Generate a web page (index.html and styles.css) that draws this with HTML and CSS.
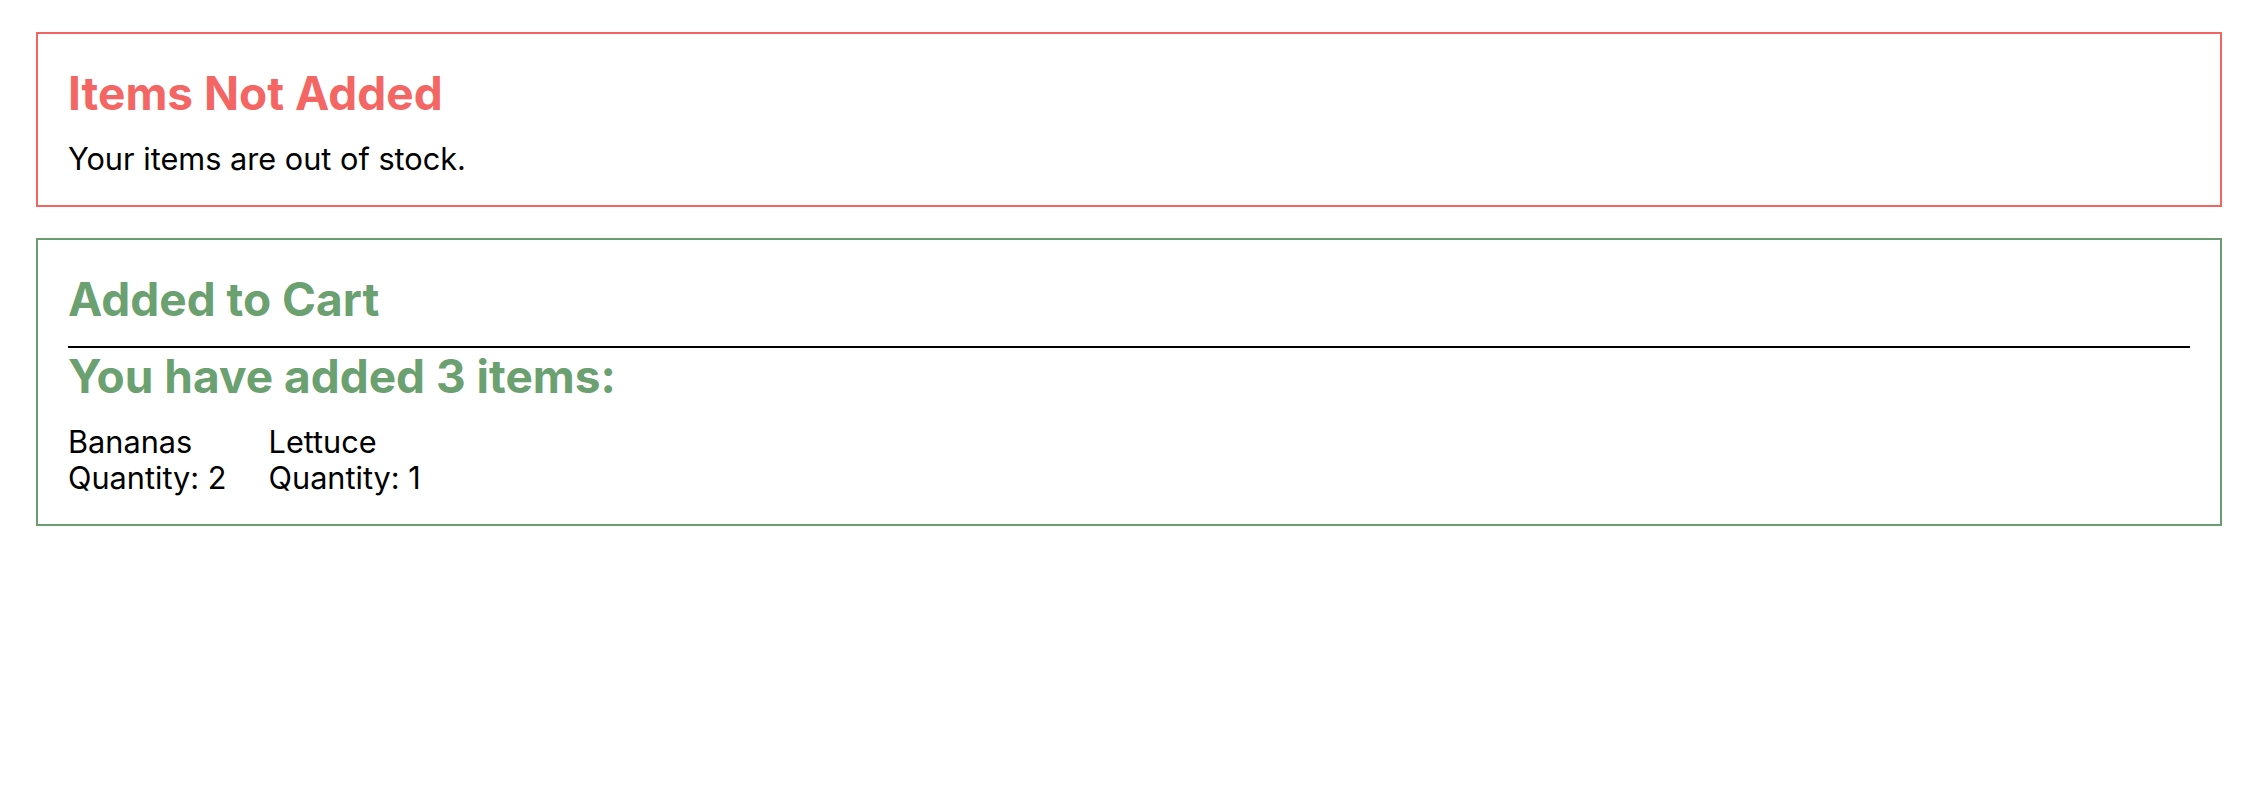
FILE: index.html
```html
<!DOCTYPE html>
<html>
<head>
    <meta charset="UTF-8">
    <meta name="viewport" content="width=device-width, initial-scale=1" />
    <title>Cart</title>
    <link rel="stylesheet" href="styles.css">
</head>
<body>

<div id="content">
    <section class="notice error">
        <h2>Items Not Added</h2>
        <p>Your items are out of stock.</p>
    </section>

    <section class="notice success">
        <h2>Added to Cart</h2>
        <hr>
        <h2>You have added 3 items:</h2>
        <ul class="items">
            <li>Bananas<br>Quantity: 2</li>
            <li>Lettuce<br>Quantity: 1</li>
        </ul>
    </section>
</div>

</body>
</html>
```

FILE: styles.css
```css
html {
    font-family: Inter, "Noto Sans", sans-serif;
}

body {
    margin: 0;
    font-size: 30.7px;
    line-height: 36px;
    color: #000;
}

#content {
    padding: 32px 38px 0 36px;
}

.notice {
    border: 2px solid;
    padding: 31px 30px 28px;
    margin-bottom: 31px;
}

.notice h2 {
    font-size: 46px;
    line-height: normal;
    font-weight: 700;
    margin: 0 0 20px;
}

.notice p {
    margin: 0;
}

.error {
    border-color: #f26461;
}

.error h2 {
    color: #f46663;
}

.success {
    border-color: #6b9e6f;
}

.success h2 {
    color: #6ba070;
}

.success h2:first-child {
    margin-bottom: 19px;
}

hr {
    border: 0;
    border-top: 2px solid #000;
    margin: 0;
}

.items {
    display: flex;
    gap: 42px;
    list-style: none;
    margin: 0;
    padding: 0;
}
```
